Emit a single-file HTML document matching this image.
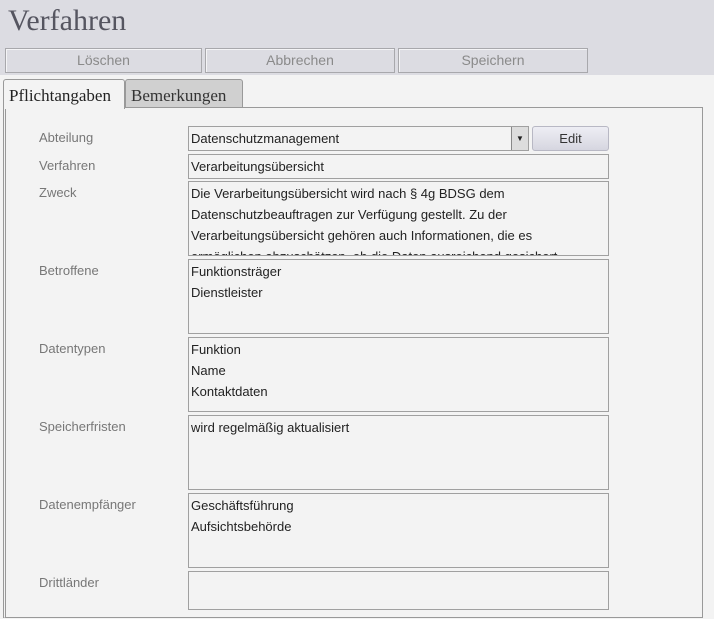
<!DOCTYPE html>
<html><head><meta charset="utf-8"><style>
*{box-sizing:border-box;margin:0;padding:0}
body{width:714px;height:619px;background:#f3f3f3;font-family:"Liberation Sans",sans-serif;position:relative;overflow:hidden}
.top{position:absolute;left:0;top:0;width:714px;height:75px;background:#dcdce2}
h1{position:absolute;left:8px;top:4px;font:30px "Liberation Serif",serif;color:#555560;font-weight:normal}
.b{position:absolute;top:48px;height:25px;border:1px solid #a8a8ac;background:#dcdce2;color:#8a8a8a;font-size:14px;text-align:center;line-height:23px;box-shadow:inset 1px 1px 0 #f4f4f6}
.tab{position:absolute;top:79px;height:29px;border:1px solid #999;border-bottom:none;font:17px "Liberation Serif",serif;line-height:31px;padding-left:6px;border-radius:3px 3px 0 0}
.panel{position:absolute;left:3px;top:107px;width:700px;height:511px;border:1px solid #999;border-left:3px double #999}
.l{position:absolute;left:39px;font-size:13px;color:#777}
.f{position:absolute;left:188px;width:421px;border:1px solid #a0a0a0;background:#f3f3f3;font-size:13px;color:#222;padding:1px 2px;line-height:21px;overflow:hidden}
</style></head><body>
<div class="top"></div>
<h1>Verfahren</h1>
<div class="b" style="left:5px;width:197px">Löschen</div>
<div class="b" style="left:205px;width:190px">Abbrechen</div>
<div class="b" style="left:398px;width:190px">Speichern</div>
<div class="panel"></div>
<div class="tab" style="left:3px;width:122px;background:#f3f3f3;height:30px;color:#222;padding-left:5px">Pflichtangaben</div>
<div class="tab" style="left:125px;width:118px;background:#d0d0d0;color:#333;border-bottom:1px solid #999;padding-left:5px">Bemerkungen</div>
<div class="l" style="top:130px">Abteilung</div>
<div class="l" style="top:158px">Verfahren</div>
<div class="l" style="top:185px">Zweck</div>
<div class="l" style="top:263px">Betroffene</div>
<div class="l" style="top:341px">Datentypen</div>
<div class="l" style="top:419px">Speicherfristen</div>
<div class="l" style="top:497px">Datenempfänger</div>
<div class="l" style="top:575px">Drittländer</div>
<div class="f" style="top:126px;width:341px;height:25px">Datenschutzmanagement<div style="position:absolute;right:0;top:0;width:17px;height:23px;border-left:1px solid #888;background:#ddd;font-size:8px;text-align:center;line-height:23px">▼</div></div>
<div style="position:absolute;left:532px;top:126px;width:77px;height:25px;border:1px solid #b8b8c4;border-radius:3px;background:linear-gradient(#eeeef4,#d6d6e0);font-size:13px;text-align:center;line-height:23px;color:#333">Edit</div>
<div class="f" style="top:154px;height:25px">Verarbeitungsübersicht</div>
<div class="f" style="top:181px;height:75px">Die Verarbeitungsübersicht wird nach § 4g BDSG dem Datenschutzbeauftragen zur Verfügung gestellt. Zu der Verarbeitungsübersicht gehören auch Informationen, die es ermöglichen abzuschätzen, ob die Daten ausreichend gesichert</div>
<div class="f" style="top:259px;height:75px">Funktionsträger<br>Dienstleister</div>
<div class="f" style="top:337px;height:75px">Funktion<br>Name<br>Kontaktdaten</div>
<div class="f" style="top:415px;height:75px">wird regelmäßig aktualisiert</div>
<div class="f" style="top:493px;height:75px">Geschäftsführung<br>Aufsichtsbehörde</div>
<div class="f" style="top:571px;height:39px"></div>
</body></html>
